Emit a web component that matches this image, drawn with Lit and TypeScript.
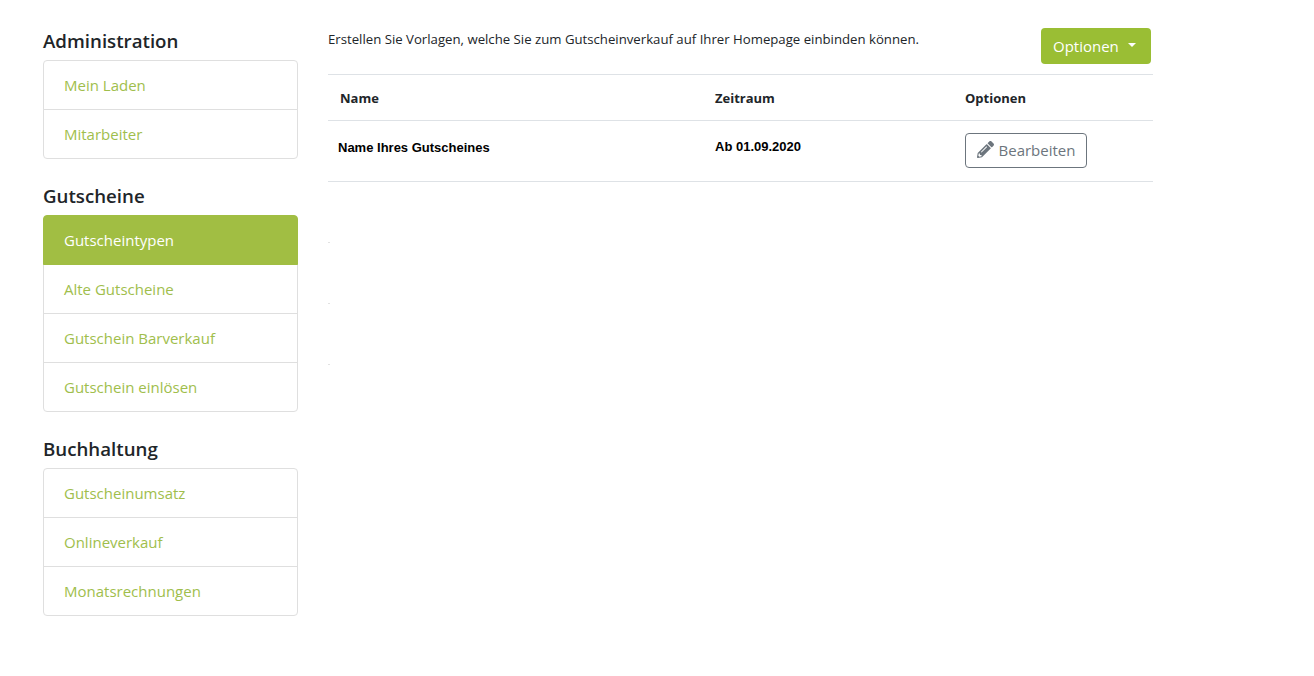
import { LitElement, html, css } from "lit";
import { customElement } from "lit/decorators.js";

const groups = [
	{ title: "Administration", items: ["Mein Laden", "Mitarbeiter"] },
	{ title: "Gutscheine", items: ["Gutscheintypen", "Alte Gutscheine", "Gutschein Barverkauf", "Gutschein einlösen"] },
	{ title: "Buchhaltung", items: ["Gutscheinumsatz", "Onlineverkauf", "Monatsrechnungen"] },
];

@customElement("app-root")
export class AppRoot extends LitElement {
	static styles = css`
		:host {
			display: block;
			height: 676px;
			background: #fff;
			color: #212529;
			font-family: "Open Sans", "Noto Sans", sans-serif;
			font-size: 15px;
		}
		.page {
			display: flex;
			padding: 28px 0 0 43px;
		}
		.sidebar {
			width: 255px;
			margin-right: 30px;
		}
		h5 {
			font-size: 18.7px;
			font-weight: 600;
			line-height: 26px;
			margin: 0 0 6px;
		}
		.list {
			margin-bottom: 24px;
		}
		.item {
			position: relative;
			box-sizing: border-box;
			height: 50px;
			line-height: 48px;
			padding: 0 20px;
			margin-top: -1px;
			color: #a0be4c;
			border: 1px solid #dfdfdf;
		}
		.item:first-child {
			margin-top: 0;
			border-radius: 4px 4px 0 0;
		}
		.item:last-child {
			border-radius: 0 0 4px 4px;
		}
		.item.active {
			z-index: 1;
			background: #a1be43;
			border-color: #a1be43;
			color: #fff;
		}
		.main {
			width: 825px;
		}
		.top {
			display: flex;
			justify-content: space-between;
			height: 46px;
		}
		.intro {
			font-size: 13.2px;
			line-height: 23px;
			margin: 0;
		}
		.options {
			width: 110px;
			height: 36px;
			margin-right: 2px;
			background: #9abe34;
			color: #fff;
			border: none;
			border-radius: 4px;
			font: inherit;
			display: flex;
			align-items: center;
			justify-content: flex-start;
			gap: 9px;
			padding: 0 0 0 12px;
		}
		.caret {
			border-top: 4.8px solid #fff;
			border-left: 4.8px solid transparent;
			border-right: 4.8px solid transparent;
			margin-top: -2px;
		}
		.row {
			display: grid;
			grid-template-columns: 375px 250px 200px;
			border-bottom: 1px solid #dee2e6;
		}
		.head {
			border-top: 1px solid #dee2e6;
			height: 45px;
			align-items: center;
			font-size: 13px;
			font-weight: 700;
		}
		.head div {
			padding-left: 12px;
		}
		.body {
			height: 60px;
			font-family: "Liberation Sans", Arial, sans-serif;
			font-size: 13px;
			line-height: 15px;
			font-weight: 700;
			color: #000;
		}
		.name {
			padding: 19px 0 0 10px;
		}
		.date {
			padding: 18px 0 0 12px;
		}
		.action {
			padding: 12px 0 0 12px;
		}
		.edit {
			width: 122px;
			height: 35px;
			background: #fff;
			color: #6c757d;
			border: 1px solid #6c757d;
			border-radius: 4px;
			font-family: "Open Sans", "Noto Sans", sans-serif;
			font-size: 15px;
			display: flex;
			align-items: center;
			justify-content: center;
			gap: 5px;
			padding: 0 0 2px;
		}
		.edit svg {
			width: 17px;
			height: 17px;
			fill: #6c757d;
		}
		.marks {
			display: flex;
			flex-direction: column;
			gap: 60px;
			margin-top: 60px;
		}
		.marks i {
			display: block;
			width: 2px;
			height: 1px;
			background: #e2e2e2;
		}
	`;

	render() {
		return html`
			<div class="page">
				<nav class="sidebar">
					${groups.map(
						(g) => html`
							<h5>${g.title}</h5>
							<div class="list">
								${g.items.map(
									(item) => html`<div class="item ${item === "Gutscheintypen" ? "active" : ""}">${item}</div>`,
								)}
							</div>
						`,
					)}
				</nav>
				<main class="main">
					<div class="top">
						<p class="intro">Erstellen Sie Vorlagen, welche Sie zum Gutscheinverkauf auf Ihrer Homepage einbinden können.</p>
						<button class="options">Optionen<span class="caret"></span></button>
					</div>
					<div class="row head">
						<div>Name</div>
						<div>Zeitraum</div>
						<div>Optionen</div>
					</div>
					<div class="row body">
						<div class="name">Name Ihres Gutscheines</div>
						<div class="date">Ab 01.09.2020</div>
						<div class="action">
							<button class="edit">
								<svg viewBox="0 0 512 512">
									<path d="M497.9 142.1l-46.1 46.1c-4.7 4.7-12.3 4.7-17 0l-111-111c-4.7-4.7-4.7-12.3 0-17l46.1-46.1c18.7-18.7 49.1-18.7 67.9 0l60.1 60.1c18.8 18.7 18.8 49.1 0 67.9zM284.2 99.8L21.6 362.4.4 483.9c-2.9 16.4 11.4 30.6 27.8 27.8l121.5-21.3 262.6-262.6c4.7-4.7 4.7-12.3 0-17l-111-111c-4.8-4.7-12.4-4.7-17.1 0zM124.1 339.9c-5.5-5.5-5.5-14.3 0-19.8l154-154c5.5-5.5 14.3-5.5 19.8 0s5.5 14.3 0 19.8l-154 154c-5.5 5.5-14.3 5.5-19.8 0zM88 424h48v36.3l-64.5 11.3-31.1-31.1L51.7 376H88v48z" />
								</svg>
								Bearbeiten
							</button>
						</div>
					</div>
					<div class="marks"><i></i><i></i><i></i></div>
				</main>
			</div>
		`;
	}
}
